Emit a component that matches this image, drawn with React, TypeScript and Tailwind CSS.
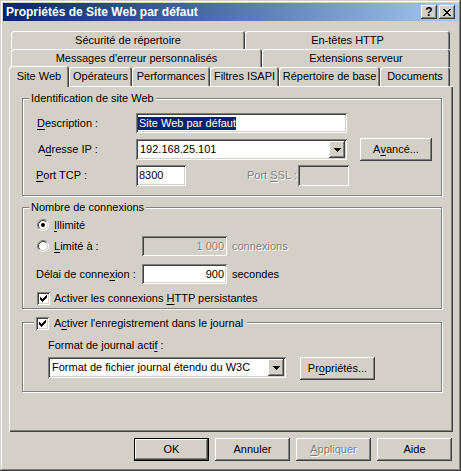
import type { ReactNode } from 'react';

// Windows classic bevels
const raised = 'shadow-[inset_-1px_-1px_#404040,inset_1px_1px_#ffffff,inset_-2px_-2px_#808080,inset_2px_2px_#d4d0c8]';
const sunken = 'shadow-[inset_1px_1px_#808080,inset_-1px_-1px_#ffffff,inset_2px_2px_#404040,inset_-2px_-2px_#d4d0c8]';
const etched = 'border border-[#808080] shadow-[inset_1px_1px_#ffffff,1px_1px_#ffffff]';
const disabledText = 'text-[#808080] [text-shadow:1px_1px_0_#ffffff]';

function U({ children }: { children: ReactNode }) {
  return <span className="underline decoration-1 underline-offset-[2px]">{children}</span>;
}

function Button({
  children,
  className = '',
  isDefault = false,
  disabled = false,
}: {
  children: ReactNode;
  className?: string;
  isDefault?: boolean;
  disabled?: boolean;
}) {
  return (
    <div
      className={`flex shrink-0 items-center justify-center bg-[#d4d0c8] ${raised} ${isDefault ? 'border border-black' : ''} ${disabled ? disabledText : ''} ${className}`}
    >
      {children}
    </div>
  );
}

function Field({ children, className = '', disabled = false }: { children?: ReactNode; className?: string; disabled?: boolean }) {
  return (
    <div
      className={`flex shrink-0 items-center px-[3px] ${sunken} ${disabled ? `bg-[#d4d0c8] ${disabledText}` : 'bg-white'} ${className}`}
    >
      {children}
    </div>
  );
}

function Arrow() {
  return (
    <svg width="7" height="4" viewBox="0 0 7 4">
      <path d="M0 0h7v1H0zM1 1h5v1H1zM2 2h3v1H2zM3 3h1v1H3z" fill="#000" />
    </svg>
  );
}

function Combo({ value, className = '' }: { value: string; className?: string }) {
  return (
    <div className={`flex shrink-0 items-stretch bg-white p-[2px] ${sunken} ${className}`}>
      <span className="flex flex-1 items-center overflow-hidden whitespace-nowrap pl-[2px]">{value}</span>
      <div className={`flex w-[16px] items-center justify-center bg-[#d4d0c8] ${raised}`}>
        <Arrow />
      </div>
    </div>
  );
}

function Checkbox() {
  return (
    <span className={`flex h-[13px] w-[13px] shrink-0 bg-white ${sunken}`}>
      <svg width="13" height="13" viewBox="0 0 13 13">
        <path
          d="M3 5h1v3H3zM4 6h1v3H4zM5 7h1v3H5zM6 6h1v3H6zM7 5h1v3H7zM8 4h1v3H8zM9 3h1v3H9z"
          fill="#000"
        />
      </svg>
    </span>
  );
}

function Radio({ checked = false }: { checked?: boolean }) {
  return (
    <svg width="12" height="12" viewBox="0 0 12 12" className="shrink-0">
      <circle cx="6" cy="6" r="4.5" fill="#fff" />
      <path d="M2.11 9.89A5.5 5.5 0 0 1 9.89 2.11" stroke="#808080" fill="none" />
      <path d="M9.89 2.11A5.5 5.5 0 0 1 2.11 9.89" stroke="#fff" fill="none" />
      <path d="M2.82 9.18A4.5 4.5 0 0 1 9.18 2.82" stroke="#404040" fill="none" />
      <path d="M9.18 2.82A4.5 4.5 0 0 1 2.82 9.18" stroke="#d4d0c8" fill="none" />
      {checked && <circle cx="6" cy="6" r="2" fill="#000" />}
    </svg>
  );
}

function Group({
  legend,
  legendClassName,
  className,
  children,
}: {
  legend: ReactNode;
  legendClassName: string;
  className: string;
  children: ReactNode;
}) {
  return (
    <div className={`w-[420px] ${etched} ${className}`}>
      <div className={`flex h-[13px] w-fit items-center bg-[#d4d0c8] px-[2px] ${legendClassName}`}>{legend}</div>
      {children}
    </div>
  );
}

const tabShape =
  'flex items-center justify-center whitespace-nowrap rounded-t-[3px] bg-[#d4d0c8] shadow-[inset_1px_1px_#ffffff,inset_-1px_0_#404040,inset_-2px_0_#808080]';

function TitleBar() {
  return (
    <div className="flex h-[18px] items-center bg-linear-to-r from-[#0a246a] to-[#a6caf0] pl-[3px] pr-[3px]">
      <span className="flex-1 text-[12px] font-bold text-white">Propriétés de Site Web par défaut</span>
      <div className={`flex h-[14px] w-[16px] items-center justify-center bg-[#d4d0c8] text-[12px] font-bold leading-none ${raised}`}>
        ?
      </div>
      <div className={`ml-[2px] flex h-[14px] w-[16px] items-center justify-center bg-[#d4d0c8] ${raised}`}>
        <svg width="8" height="7" viewBox="0 0 8 7">
          <path
            d="M0 0h2v1H0zM6 0h2v1H6zM1 1h2v1H1zM5 1h2v1H5zM2 2h4v1H2zM3 3h2v1H3zM2 4h4v1H2zM1 5h2v1H1zM5 5h2v1H5zM0 6h2v1H0zM6 6h2v1H6z"
            fill="#000"
          />
        </svg>
      </div>
    </div>
  );
}

function Tabs() {
  return (
    <div>
      <div className="ml-[2px] flex h-[18px]">
        <div className={`${tabShape} w-[234px]`}>Sécurité de répertoire</div>
        <div className={`${tabShape} w-[205px]`}>En-têtes HTTP</div>
      </div>
      <div className="ml-[2px] flex h-[18px]">
        <div className={`${tabShape} w-[251px]`}>Messages d'erreur personnalisés</div>
        <div className={`${tabShape} w-[188px]`}>Extensions serveur</div>
      </div>
      <div className="flex h-[19px] items-end">
        <div className={`${tabShape} relative z-10 -mb-px h-[21px] w-[60px]`}>Site Web</div>
        <div className={`${tabShape} h-[19px] w-[63px]`}>Opérateurs</div>
        <div className={`${tabShape} h-[19px] w-[78px]`}>Performances</div>
        <div className={`${tabShape} h-[19px] w-[69px]`}>Filtres ISAPI</div>
        <div className={`${tabShape} h-[19px] w-[101px]`}>Répertoire de base</div>
        <div className={`${tabShape} h-[19px] w-[70px]`}>Documents</div>
      </div>
    </div>
  );
}

export default function App() {
  return (
    <div className="h-[471px] w-[461px] overflow-hidden bg-[#d4d0c8] p-[3px] font-['Liberation_Sans',Arial,sans-serif] text-[11px] leading-[13px] text-black shadow-[inset_-1px_-1px_#404040,inset_1px_1px_#d4d0c8,inset_-2px_-2px_#808080,inset_2px_2px_#ffffff]">
      <TitleBar />

      <div className="pl-[6px] pt-[10px]">
        <Tabs />

        <div className="h-[346px] w-[444px] border-l border-t border-white pl-[12px] pt-[11px] shadow-[inset_-1px_-1px_#404040,inset_-2px_-2px_#808080]">
          <Group legend="Identification de site Web" legendClassName="-mt-[7px] ml-[6px]" className="h-[98px]">
            <div className="mt-[8px] flex h-[20px] items-center pl-[14px]">
              <span className="w-[99px]">
                <U>D</U>escription :
              </span>
              <Field className="h-[20px] w-[211px] !pl-[2px]">
                <span className="bg-[#0a246a] pl-[1px] text-white">Site Web par défaut</span>
              </Field>
            </div>
            <div className="mt-[6px] flex h-[21px] items-center pl-[14px]">
              <span className="w-[99px] pl-[1px]">
                A<U>d</U>resse IP :
              </span>
              <Combo className="h-[21px] w-[211px]" value="192.168.25.101" />
              <Button className="ml-[13px] h-[23px] w-[72px]">
                A<U>v</U>ancé...
              </Button>
            </div>
            <div className="mt-[5px] flex h-[21px] items-center pl-[13px]">
              <span className="w-[100px]">
                <U>P</U>ort TCP :
              </span>
              <Field className="h-[21px] w-[50px]">8300</Field>
              <span className={`ml-[61px] w-[51px] ${disabledText}`}>
                Port <U>S</U>SL :
              </span>
              <Field disabled className="h-[21px] w-[51px]" />
            </div>
          </Group>

          <Group legend="Nombre de connexions" legendClassName="-mt-[7px] ml-[6px]" className="mt-[11px] h-[102px]">
            <div className="mt-[4px] flex h-[14px] items-center pl-[14px]">
              <Radio checked />
              <span className="ml-[5px]">
                <U>I</U>llimité
              </span>
            </div>
            <div className="mt-[4px] flex h-[20px] items-center pl-[14px]">
              <Radio />
              <span className="ml-[5px] w-[88px]">
                <U>L</U>imité à :
              </span>
              <Field disabled className="h-[20px] w-[85px] justify-end">
                1 000
              </Field>
              <span className={`ml-[5px] ${disabledText}`}>connexions</span>
            </div>
            <div className="mt-[8px] flex h-[20px] items-center pl-[13px]">
              <span className="w-[106px]">
                Délai de conne<U>x</U>ion :
              </span>
              <Field className="h-[20px] w-[85px] justify-end">900</Field>
              <span className="ml-[5px]">secondes</span>
            </div>
            <div className="mt-[8px] flex h-[13px] items-center pl-[14px]">
              <Checkbox />
              <span className="ml-[4px]">
                Activer les connexions <U>H</U>TTP persistantes
              </span>
            </div>
          </Group>

          <Group
            legend={
              <>
                <Checkbox />
                <span>
                  A<U>c</U>tiver l'enregistrement dans le journal
                </span>
              </>
            }
            legendClassName="-mt-[6px] ml-[11px] gap-[5px] pr-[4px]"
            className="mt-[13px] h-[70px]"
          >
            <div className="mt-[9px] h-[13px] pl-[25px]">
              Format de journal acti<U>f</U> :
            </div>
            <div className="mt-[5px] flex items-start pl-[25px]">
              <Combo className="h-[21px] w-[238px]" value="Format de fichier journal étendu du W3C" />
              <Button className="ml-[14px] h-[23px] w-[75px]">
                Pr<U>o</U>priétés...
              </Button>
            </div>
          </Group>
        </div>
      </div>

      <div className="mt-[6px] flex justify-end gap-[6px] pr-[6px]">
        <Button isDefault className="h-[23px] w-[75px]">
          OK
        </Button>
        <Button className="h-[23px] w-[75px]">Annuler</Button>
        <Button disabled className="h-[23px] w-[75px]">
          <span>
            <U>A</U>ppliquer
          </span>
        </Button>
        <Button className="h-[23px] w-[75px]">Aide</Button>
      </div>
    </div>
  );
}
